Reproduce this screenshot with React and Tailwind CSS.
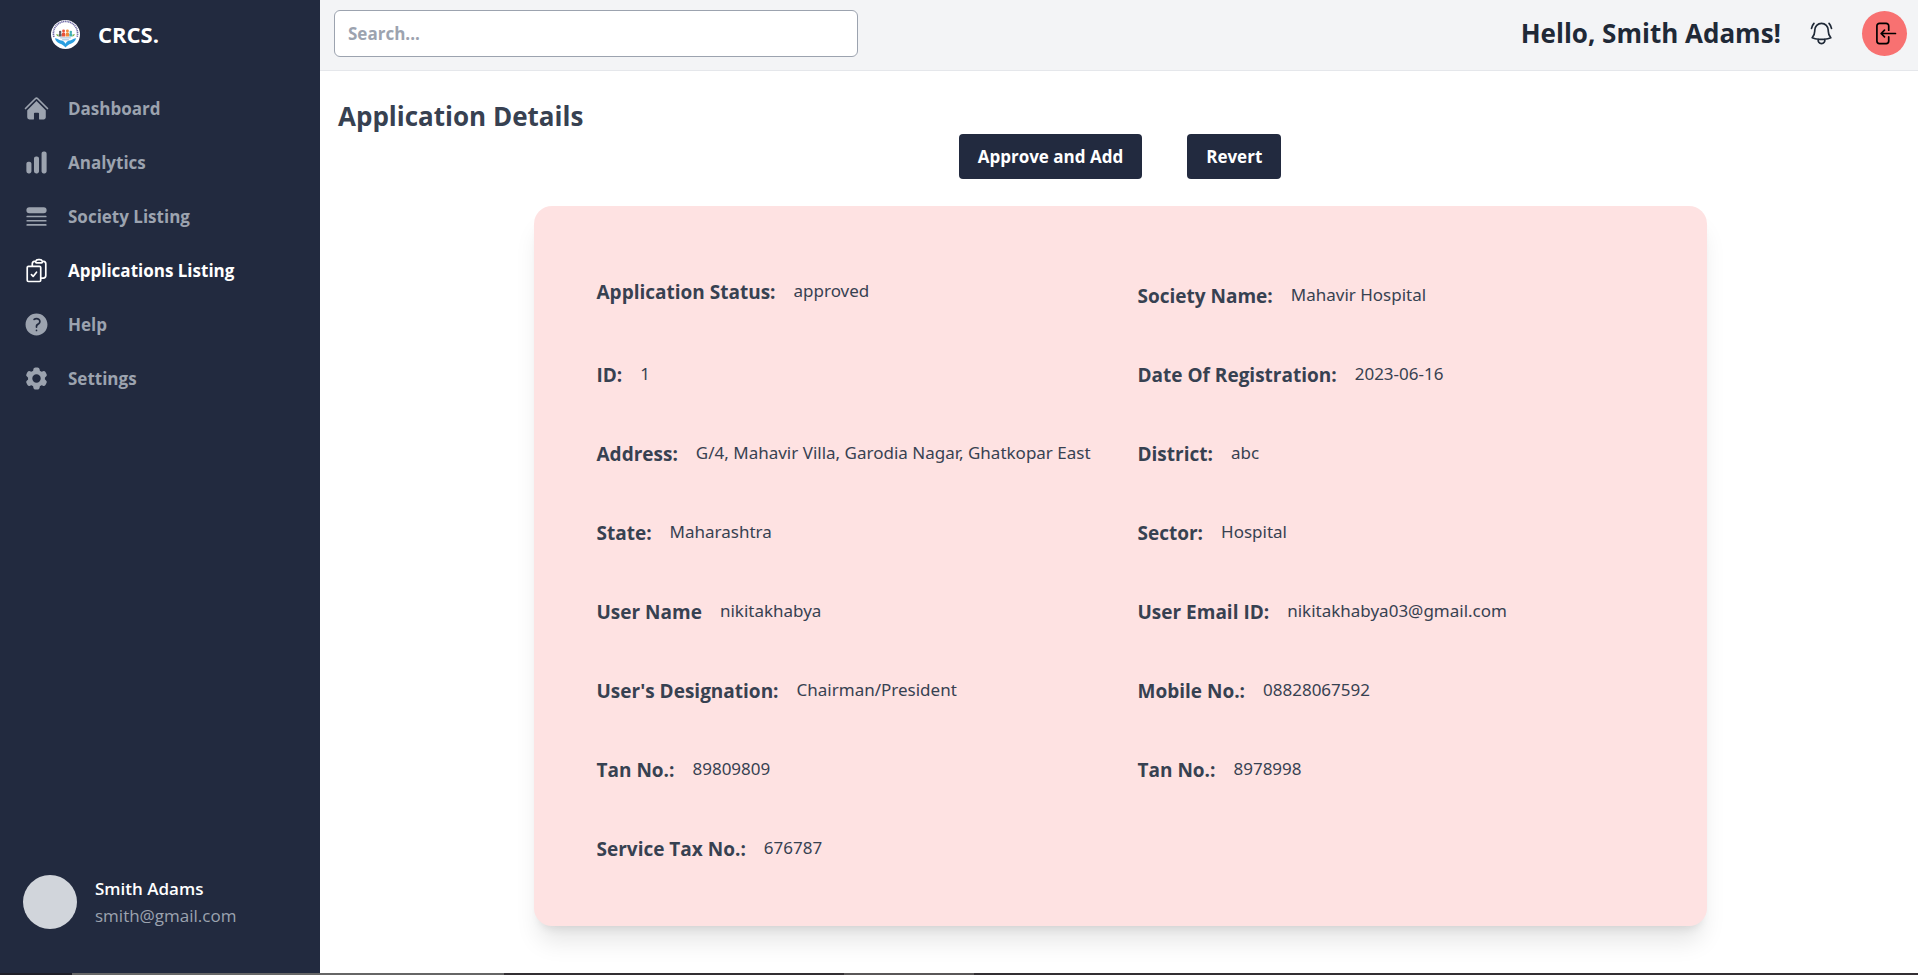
import {
  HiHome,
  HiChartBar,
  HiQueueList,
  HiOutlineClipboardDocumentCheck,
  HiQuestionMarkCircle,
  HiCog6Tooth,
  HiOutlineBellAlert,
} from "react-icons/hi2";

const NAV = [
  { label: "Dashboard", Icon: HiHome },
  { label: "Analytics", Icon: HiChartBar },
  { label: "Society Listing", Icon: HiQueueList },
  { label: "Applications Listing", Icon: HiOutlineClipboardDocumentCheck, active: true },
  { label: "Help", Icon: HiQuestionMarkCircle },
  { label: "Settings", Icon: HiCog6Tooth },
];

const DETAILS = [
  ["Application Status:", "approved"],
  ["Society Name:", "Mahavir Hospital"],
  ["ID:", "1"],
  ["Date Of Registration:", "2023-06-16"],
  ["Address:", "G/4, Mahavir Villa, Garodia Nagar, Ghatkopar East"],
  ["District:", "abc"],
  ["State:", "Maharashtra"],
  ["Sector:", "Hospital"],
  ["User Name", "nikitakhabya"],
  ["User Email ID:", "nikitakhabya03@gmail.com"],
  ["User's Designation:", "Chairman/President"],
  ["Mobile No.:", "08828067592"],
  ["Tan No.:", "89809809"],
  ["Tan No.:", "8978998"],
  ["Service Tax No.:", "676787"],
];

function Logo() {
  return (
    <svg viewBox="0 0 60 60" className="size-[29px]" aria-hidden="true">
      <circle cx="30" cy="30" r="30" fill="#fff" />
      <path d="M6 35a25 25 0 1 1 48 0" fill="none" stroke="#6f6aa6" strokeWidth="3.5" strokeDasharray="2.5 1.2" />
      <g fill="#5b5b66"><circle cx="19" cy="25" r="2.6" /><path d="M16 34v-4a3 3 0 0 1 6 0v4z" /></g>
      <g fill="#e8503a"><circle cx="26" cy="22.5" r="3" /><path d="M22.5 34v-5a3.5 3.5 0 0 1 7 0v5z" /></g>
      <g fill="#f08a3c"><circle cx="34" cy="22.5" r="3" /><path d="M30.5 34v-5a3.5 3.5 0 0 1 7 0v5z" /></g>
      <g fill="#3fb0b5"><circle cx="41" cy="25" r="2.6" /><path d="M38 34v-4a3 3 0 0 1 6 0v4z" /></g>
      <path d="M11 29c3 0 5 2 5 5-3 0-5-2-5-5zM49 29c-3 0-5 2-5 5 3 0 5-2 5-5z" fill="#7cb342" />
      <path d="M19 37h22M23 41h14" stroke="#9bb8d8" strokeWidth="2" />
      <path d="M8 38c4 0 8 3 11 4 4 0 8 2 11 7 3-5 7-7 11-7 3-1 7-4 11-4-2 7-7 10-11 11-4 1-8 4-11 8-3-4-7-7-11-8-4-1-9-4-11-11z" fill="#2b9fe0" />
    </svg>
  );
}

function LogoutIcon() {
  return (
    <svg viewBox="0 0 24 24" fill="none" stroke="currentColor" strokeWidth="1.5" strokeLinecap="round" strokeLinejoin="round" className="size-[27px]" aria-hidden="true">
      <path d="M15.75 9V5.25A2.25 2.25 0 0 0 13.5 3h-6a2.25 2.25 0 0 0-2.25 2.25v13.5A2.25 2.25 0 0 0 7.5 21h6a2.25 2.25 0 0 0 2.25-2.25V15M12 9l-3 3m0 0 3 3m-3-3h12.75" />
    </svg>
  );
}

export default function App() {
  return (
    <div className="flex min-h-screen flex-col bg-white font-['Segoe_UI','Open_Sans','Noto_Sans',sans-serif] text-[17px] leading-[27px]">
      <div className="flex flex-1">
        <aside className="flex w-80 shrink-0 flex-col bg-[#222a3f]">
          <div className="flex h-[69px] items-center gap-[18px] pl-[51px]">
            <Logo />
            <span className="text-[22px] font-bold text-white">CRCS.</span>
          </div>
          <nav className="flex flex-col pt-3">
            {NAV.map(({ label, Icon, active }) => (
              <a
                key={label}
                href="#"
                className={
                  active
                    ? "flex h-[54px] items-center gap-[18px] pl-[23px] font-bold text-white"
                    : "flex h-[54px] items-center gap-[18px] pl-[23px] font-bold text-[#9ca3af]"
                }
              >
                <Icon className="size-[27px]" />
                {label}
              </a>
            ))}
          </nav>
          <div className="mt-auto flex items-center gap-[18px] pb-11 pl-[23px]">
            <span className="size-[54px] rounded-full bg-[#d1d5db]" />
            <div>
              <p className="font-semibold text-white">Smith Adams</p>
              <p className="text-[#9ca3af]">smith@gmail.com</p>
            </div>
          </div>
        </aside>

        <div className="flex min-w-0 flex-1 flex-col">
          <header className="flex h-[71px] items-center justify-between border-b border-[#e5e7eb] bg-[#f3f4f6] pr-[11px] pl-[14px]">
            <input
              type="search"
              aria-label="Search"
              placeholder="Search..."
              className="mb-1 h-[47px] w-1/3 rounded-md border border-[#9ca3af] bg-white px-[13px] font-bold text-gray-700 placeholder:text-[#9ca3af]"
            />
            <div className="mb-1 flex items-center text-[#1f2937]">
              <p className="text-[26px] font-bold">Hello, Smith Adams!</p>
              <button type="button" aria-label="Notifications" className="ml-[27px]">
                <HiOutlineBellAlert className="size-[27px]" />
              </button>
              <button type="button" aria-label="Log out" className="ml-[27px] flex size-[45px] items-center justify-center rounded-full bg-[#f87171] text-black">
                <LogoutIcon />
              </button>
            </div>
          </header>

          <main className="flex-1 pt-7 pr-4 pl-[18px]">
            <h1 className="text-[26px] leading-[35px] font-bold text-[#374151]">Application Details</h1>
            <div className="flex justify-center gap-[45px]">
              <button type="button" className="rounded bg-[#222a3f] px-[19px] py-[9px] font-bold text-white">Approve and Add</button>
              <button type="button" className="rounded bg-[#222a3f] px-[19px] py-[9px] font-bold text-white">Revert</button>
            </div>
            <section className="mx-auto mt-[27px] mb-[47px] w-3/4 rounded-[18px] bg-[#fee2e2] px-[63px] pt-[68px] pb-[59px] text-[#374151] shadow-xl">
              <dl className="grid grid-cols-[541px_1fr] gap-y-[43px]">
                {DETAILS.map(([term, value], i) => (
                  <div key={i} className={i === 1 ? "flex gap-[18px] pt-1" : "flex gap-[18px]"}>
                    <dt className="text-[19px] leading-9 font-bold whitespace-nowrap">{term}</dt>
                    <dd className="font-['Segoe_UI','Noto_Sans',sans-serif] leading-[34px] whitespace-nowrap">{value}</dd>
                  </div>
                ))}
              </dl>
            </section>
          </main>
        </div>
      </div>
      <div className="flex h-0.5 bg-[#332f33]">
        <span className="w-[72px] bg-[#1f1f28]" />
        <span className="w-[432px] bg-[#666666]" />
        <span className="w-[340px]" />
        <span className="w-[130px] bg-[#5a5758]" />
      </div>
    </div>
  );
}
